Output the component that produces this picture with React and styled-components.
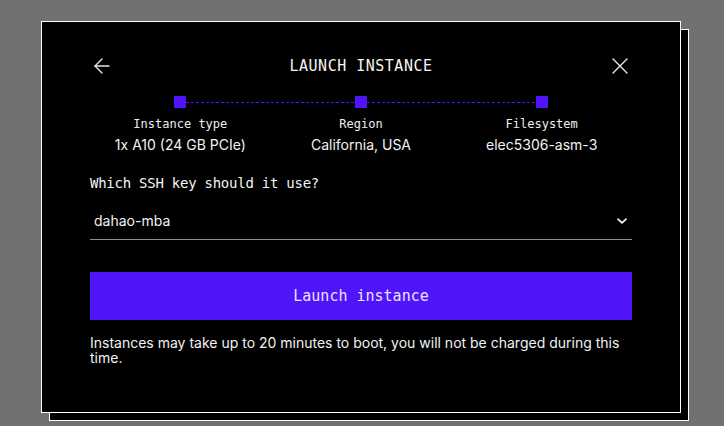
import React from "react";
import styled, { createGlobalStyle } from "styled-components";

const PURPLE = "#5014f8";
const MONO = `"DejaVu Sans Mono", "Liberation Mono", monospace`;
const SANS = `Inter, "Noto Sans", "Liberation Sans", sans-serif`;

const GlobalStyle = createGlobalStyle`
  html, body { margin: 0; padding: 0; }
  body {
    background: #717171;
    font-family: ${SANS};
    color: #f2f2f2;
    -webkit-font-smoothing: antialiased;
  }
  * { box-sizing: border-box; }
`;

const Stage = styled.div`
  min-height: 100vh;
  padding: 21px 0 0 41px;
`;

const Modal = styled.section`
  width: 640px;
  height: 392px;
  background: #000;
  border: 1px solid #fff;
  box-shadow: 8px 8px 0 -1px #000, 8px 8px 0 0 #fff;
  padding: 32px 48px 0;
  display: flex;
  flex-direction: column;
`;

const Header = styled.header`
  display: flex;
  align-items: center;
  justify-content: space-between;
  height: 24px;
`;

const IconButton = styled.button`
  width: 24px;
  height: 24px;
  padding: 0;
  border: 0;
  background: none;
  color: #e6e6e6;
  display: flex;
  align-items: center;
  justify-content: center;
  cursor: pointer;
`;

const Title = styled.h1`
  margin: 0;
  font-family: ${MONO};
  font-size: 15px;
  font-weight: 400;
  letter-spacing: 0.5px;
  color: #f4f4f4;
  line-height: 24px;
`;

const Stepper = styled.div`
  margin-top: 18px;
  display: flex;
  flex-direction: column;
`;

const Track = styled.div`
  display: flex;
  align-items: center;
  height: 12px;
  padding: 0 84px;
`;

const Node = styled.span`
  width: 12px;
  height: 12px;
  background: ${PURPLE};
  flex: none;
`;

const Connector = styled.span`
  flex: 1;
  height: 1px;
  background: repeating-linear-gradient(
    to right,
    ${PURPLE} 0 3px,
    transparent 3px 5px
  );
`;

const StepGrid = styled.div`
  display: grid;
  grid-template-columns: repeat(3, 1fr);
  margin-top: 8px;
`;

const Step = styled.div`
  display: flex;
  flex-direction: column;
  align-items: center;
`;

const StepLabel = styled.span`
  font-family: ${MONO};
  font-size: 12px;
  line-height: 16px;
  color: #eeeeee;
`;

const StepValue = styled.span`
  margin-top: 3px;
  font-family: ${SANS};
  font-size: 14px;
  line-height: 20px;
  color: #f2f2f2;
`;

const Question = styled.h2`
  margin: 18px 0 0;
  font-family: ${MONO};
  font-size: 14px;
  font-weight: 400;
  letter-spacing: -0.25px;
  line-height: 20px;
  color: #f4f4f4;
`;

const Select = styled.div`
  margin-top: 11px;
  height: 36px;
  display: flex;
  align-items: center;
  justify-content: space-between;
  padding: 0 4px 1px 4px;
  border-bottom: 1px solid #8c8c8c;
  font-size: 14px;
  line-height: 20px;
  color: #f2f2f2;
`;

const Button = styled.button`
  margin-top: 32px;
  height: 48px;
  width: 100%;
  border: 0;
  background: ${PURPLE};
  color: #e8e2ff;
  font-family: ${MONO};
  font-size: 15px;
  cursor: pointer;
`;

const Note = styled.p`
  margin: 15px 0 0;
  font-size: 14px;
  line-height: 1.1;
  color: #f2f2f2;
`;

const ArrowLeft = () => (
  <svg width="24" height="24" viewBox="0 0 24 24" fill="none" stroke="currentColor" strokeWidth="1.4" strokeLinecap="round" strokeLinejoin="round">
    <path d="M12 19 5 12l7-7" />
    <path d="M19 12H5" />
  </svg>
);

const Close = () => (
  <svg width="24" height="24" viewBox="0 0 24 24" fill="none" stroke="currentColor" strokeWidth="1.4" strokeLinecap="round">
    <path d="M5 5l14 14" />
    <path d="M19 5 5 19" />
  </svg>
);

const Chevron = () => (
  <svg width="12" height="8" viewBox="0 0 12 8" fill="none" stroke="currentColor" strokeWidth="1.8" strokeLinecap="round" strokeLinejoin="round">
    <path d="M2 2.2 6 5.8l4-3.6" />
  </svg>
);

const steps = [
  { label: "Instance type", value: "1x A10 (24 GB PCIe)" },
  { label: "Region", value: "California, USA" },
  { label: "Filesystem", value: "elec5306-asm-3" },
];

export default function App() {
  return (
    <>
      <GlobalStyle />
      <Stage>
        <Modal>
          <Header>
            <IconButton aria-label="Back"><ArrowLeft /></IconButton>
            <Title>LAUNCH INSTANCE</Title>
            <IconButton aria-label="Close"><Close /></IconButton>
          </Header>
          <Stepper>
            <Track>
              <Node />
              <Connector />
              <Node />
              <Connector />
              <Node />
            </Track>
            <StepGrid>
              {steps.map((s) => (
                <Step key={s.label}>
                  <StepLabel>{s.label}</StepLabel>
                  <StepValue>{s.value}</StepValue>
                </Step>
              ))}
            </StepGrid>
          </Stepper>
          <Question>Which SSH key should it use?</Question>
          <Select>
            <span>dahao-mba</span>
            <Chevron />
          </Select>
          <Button>Launch instance</Button>
          <Note>
            Instances may take up to 20 minutes to boot, you will not be charged during this time.
          </Note>
        </Modal>
      </Stage>
    </>
  );
}
